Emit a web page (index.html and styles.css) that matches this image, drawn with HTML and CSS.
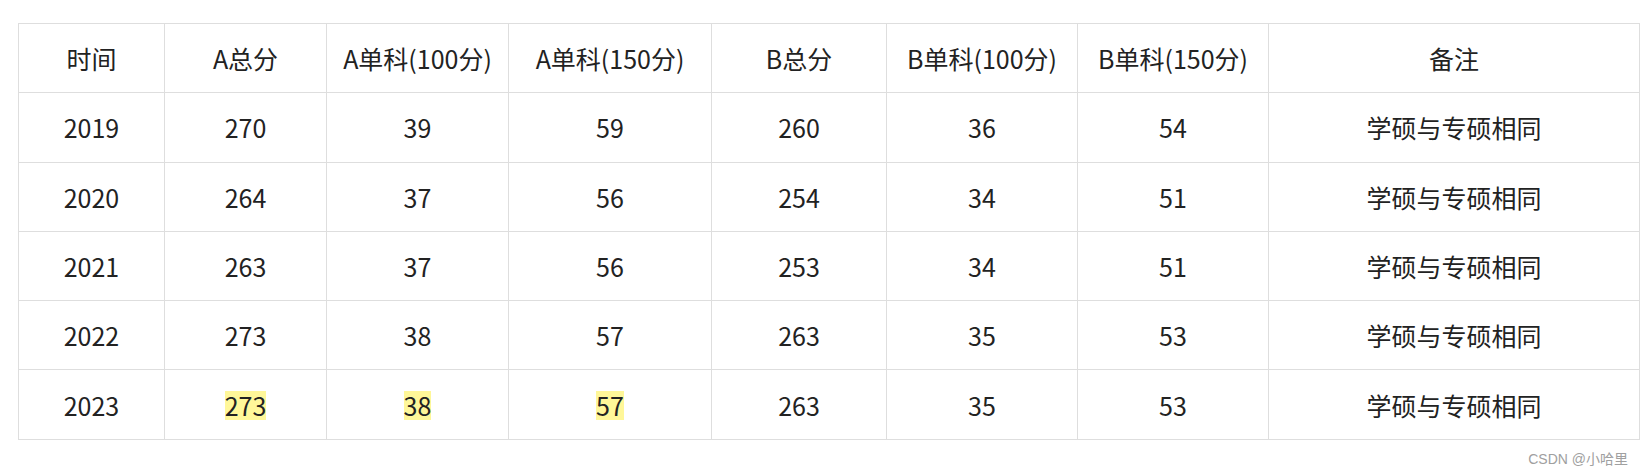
FILE: index.html
```html
<!DOCTYPE html>
<html lang="zh-CN">
<head>
<meta charset="utf-8">
<title>分数线</title>
<link rel="stylesheet" href="styles.css">
</head>
<body>
<div class="page">
  <table class="scores">
    <colgroup>
      <col class="c1"><col class="c2"><col class="c3"><col class="c4">
      <col class="c5"><col class="c6"><col class="c7"><col class="c8">
    </colgroup>
    <thead>
      <tr><th>时间</th><th>A总分</th><th>A单科(100分)</th><th>A单科(150分)</th><th>B总分</th><th>B单科(100分)</th><th>B单科(150分)</th><th>备注</th></tr>
    </thead>
    <tbody>
      <tr><td>2019</td><td>270</td><td>39</td><td>59</td><td>260</td><td>36</td><td>54</td><td>学硕与专硕相同</td></tr>
      <tr><td>2020</td><td>264</td><td>37</td><td>56</td><td>254</td><td>34</td><td>51</td><td>学硕与专硕相同</td></tr>
      <tr><td>2021</td><td>263</td><td>37</td><td>56</td><td>253</td><td>34</td><td>51</td><td>学硕与专硕相同</td></tr>
      <tr><td>2022</td><td>273</td><td>38</td><td>57</td><td>263</td><td>35</td><td>53</td><td>学硕与专硕相同</td></tr>
      <tr><td>2023</td><td><mark class="hl">273</mark></td><td><mark class="hl">38</mark></td><td><mark class="hl">57</mark></td><td>263</td><td>35</td><td>53</td><td>学硕与专硕相同</td></tr>
    </tbody>
  </table>
  <div class="watermark">CSDN @小哈里</div>
</div>
</body>
</html>
```
FILE: styles.css
```css
html, body {
  margin: 0;
  padding: 0;
  background: #fff;
}
.page {
  padding: 23px 0 0 18px;
  font-family: "Noto Sans CJK SC", "Noto Sans", sans-serif;
  color: #222;
}
.scores {
  border-collapse: collapse;
  table-layout: fixed;
  width: 1621px;
  font-size: 25px;
}
.c1 { width: 146px; }
.c2 { width: 162px; }
.c3 { width: 182px; }
.c4 { width: 203px; }
.c5 { width: 175px; }
.c6 { width: 191px; }
.c7 { width: 191px; }
.c8 { width: 371px; }
.scores th,
.scores td {
  border: 1px solid #dedede;
  height: 68.3px;
  padding: 0;
  text-align: center;
  vertical-align: middle;
  font-weight: normal;
  white-space: nowrap;
}
.hl {
  display: inline-block;
  background: #fff799;
  color: #222;
  line-height: 29px;
}
.watermark {
  display: flex;
  justify-content: flex-end;
  padding: 8px 17px 0 0;
  font-family: "Liberation Sans", "Noto Sans CJK SC", sans-serif;
  font-size: 14px;
  color: #a0a0a0;
}
```
